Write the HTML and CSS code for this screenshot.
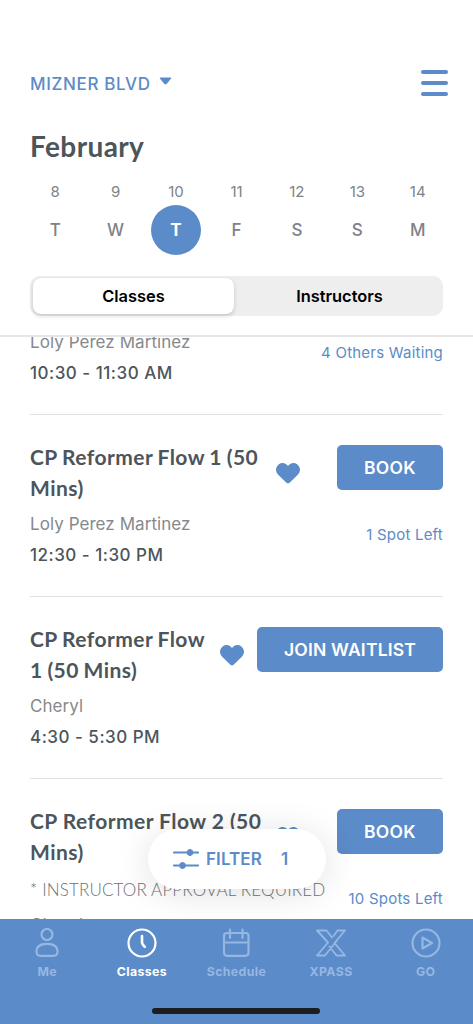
FILE: index.html
```html
<!DOCTYPE html>
<html lang="en">
<head>
<meta charset="utf-8">
<title>Classes</title>
<link rel="stylesheet" href="styles.css">
</head>
<body>
<div class="app">
  <header class="header">
    <div class="topbar">
      <div class="location"><span class="location-name">MIZNER BLVD</span>
        <svg class="caret" width="13" height="8" viewBox="0 0 12 8"><path d="M1 .5h10q1 0 .6 1L7.3 6.7Q6 8 4.700 6.700L.4 1.500Q0 .5 1 .5z" fill="currentColor"/></svg>
      </div>
      <div class="menu"><i></i><i></i><i></i></div>
    </div>
    <h1 class="month">February</h1>
    <div class="week">
      <div class="day"><span class="num">8</span><span class="letter">T</span></div>
      <div class="day"><span class="num">9</span><span class="letter">W</span></div>
      <div class="day"><span class="num">10</span><span class="letter selected">T</span></div>
      <div class="day"><span class="num">11</span><span class="letter">F</span></div>
      <div class="day"><span class="num">12</span><span class="letter">S</span></div>
      <div class="day"><span class="num">13</span><span class="letter">S</span></div>
      <div class="day"><span class="num">14</span><span class="letter">M</span></div>
    </div>
    <div class="segments">
      <div class="segment active">Classes</div>
      <div class="segment">Instructors</div>
    </div>
  </header>

  <main class="list">
    <article class="card first">
      <div class="info">
        <p class="coach">Loly Perez Martinez</p>
        <p class="time">10:30 - 11:30 AM</p>
      </div>
      <div class="actions"><span class="status">4 Others Waiting</span></div>
    </article>
    <article class="card">
      <div class="info">
        <h2 class="title tight">CP Reformer Flow 1 (50<br>Mins)</h2>
        <p class="coach">Loly Perez Martinez</p>
        <p class="time">12:30 - 1:30 PM</p>
      </div>
      <svg class="heart" width="24" height="21" viewBox="0 0 24 21"><path d="M12 3C9.500-.7 5-.8 2.200 1.900C-.7 4.700-.7 9 2.200 11.800L10.400 19.700Q12 21 13.600 19.700L21.800 11.800C24.700 9 24.700 4.700 21.800 1.900C19-.8 14.500-.7 12 3z" fill="currentColor"/></svg>
      <div class="actions"><button class="btn">BOOK</button><span class="status">1 Spot Left</span></div>
    </article>
    <article class="card">
      <div class="info">
        <h2 class="title tight">CP Reformer Flow<br>1 (50 Mins)</h2>
        <p class="coach">Cheryl</p>
        <p class="time">4:30 - 5:30 PM</p>
      </div>
      <svg class="heart" width="24" height="21" viewBox="0 0 24 21"><path d="M12 3C9.500-.7 5-.8 2.200 1.900C-.7 4.700-.7 9 2.200 11.800L10.400 19.700Q12 21 13.600 19.700L21.800 11.800C24.700 9 24.700 4.700 21.800 1.900C19-.8 14.500-.7 12 3z" fill="currentColor"/></svg>
      <div class="actions"><button class="btn wide">JOIN WAITLIST</button></div>
    </article>
    <article class="card">
      <div class="info">
        <h2 class="title">CP Reformer Flow 2 (50<br>Mins)</h2>
        <p class="note">* INSTRUCTOR APPROVAL REQUIRED</p>
        <p class="coach">Cheryl</p>
      </div>
      <svg class="heart" width="24" height="21" viewBox="0 0 24 21"><path d="M12 3C9.500-.7 5-.8 2.200 1.900C-.7 4.700-.7 9 2.200 11.800L10.400 19.700Q12 21 13.600 19.700L21.800 11.800C24.700 9 24.700 4.700 21.800 1.900C19-.8 14.500-.7 12 3z" fill="currentColor"/></svg>
      <div class="actions"><button class="btn">BOOK</button><span class="status">10 Spots Left</span></div>
    </article>
    <div class="filter">
      <svg width="26" height="22" viewBox="0 0 26 22" fill="none" stroke="currentColor" stroke-width="2.200" stroke-linecap="round"><path d="M1 4.500h24M1 17.500h24"/><circle cx="17" cy="4.500" r="3.200" fill="currentColor" stroke="none"/><circle cx="9.500" cy="17.500" r="3.200" fill="currentColor" stroke="none"/><path d="M17 2v5M9.500 15v5"/></svg>
      <span class="filter-label">FILTER</span><span class="filter-count">1</span>
    </div>
  </main>

  <nav class="tabs">
    <div class="tab">
      <svg width="30" height="30" viewBox="0 0 30 30"><circle cx="15" cy="6.500" r="5.500"/><path d="M4.500 23.500c0-5 3.700-7.700 10.500-7.700s10.500 2.700 10.500 7.700c0 2.800-1.500 4.300-4 4.300H8.500c-2.500 0-4-1.500-4-4.300z"/></svg>
      <span>Me</span>
    </div>
    <div class="tab current">
      <svg width="30" height="30" viewBox="0 0 30 30"><circle cx="15" cy="15" r="13.500"/><path d="M15 8v6.500q0 1.500 2.800 4.300" stroke-width="2.600"/></svg>
      <span>Classes</span>
    </div>
    <div class="tab">
      <svg width="30" height="30" viewBox="0 0 30 30"><rect x="3" y="5" width="24.500" height="22.800" rx="3"/><path d="M3 14.500h24.500M9 1.500v8.500M21.500 1.500v8.500"/></svg>
      <span>Schedule</span>
    </div>
    <div class="tab">
      <svg class="thin" width="30" height="30" viewBox="0 0 30 30"><path d="M12 14.500L1 2.500h9.500l5.500 7M17.500 8L21.500 2.500H29L18.500 15L29 27.500h-8.500L13.500 18.500M12 14.500L1 27.500h8L21 12.500"/></svg>
      <span>XPASS</span>
    </div>
    <div class="tab">
      <svg width="30" height="30" viewBox="0 0 30 30"><circle cx="15" cy="15" r="13.500"/><path d="M11.500 9.500v11l9.500-5.500z"/></svg>
      <span>GO</span>
    </div>
    <div class="home-bar"></div>
  </nav>
</div>
</body>
</html>
```
FILE: styles.css
```css
* { box-sizing: border-box; margin: 0; padding: 0; }
body { background: #fff; font-family: Inter, "Liberation Sans", sans-serif; color: #4c555b; }
.app { width: 473px; height: 1024px; display: flex; flex-direction: column; overflow: hidden; }

.header { height: 337px; padding: 66px 30px 0; border-bottom: 2px solid #e5e5e6; flex: none; }
.topbar { display: flex; justify-content: space-between; align-items: center; height: 34px; }
.location { display: flex; align-items: center; gap: 8px; margin-top: 1px; color: #5b8bc8; font-size: 17px; font-weight: 500; letter-spacing: .65px; }
.caret { margin-bottom: 5px; }
.menu { display: flex; flex-direction: column; gap: 7px; margin-right: -5px; }
.menu i { width: 27px; height: 4px; border-radius: 2px; background: #5b8bc8; }
.month { margin-top: 26px; height: 40px; line-height: 40px; font-family: Lato, sans-serif; font-weight: 700; font-size: 28px; letter-spacing: .4px; }
.week { display: flex; margin: 16px -5px 0; }
.day { flex: 1; display: flex; flex-direction: column; align-items: center; color: #808287; }
.num { height: 20px; line-height: 20px; font-size: 15px; }
.letter { width: 50px; height: 50px; margin-top: 3px; display: flex; align-items: center; justify-content: center; font-size: 17px; font-weight: 500; border-radius: 50%; }
.letter.selected { background: #5b8bc8; color: #fff; font-weight: 700; }
.segments { display: flex; height: 40px; margin-top: 21px; padding: 2px; border-radius: 10px; background: #eeeeef; }
.segment { flex: 1; display: flex; align-items: center; justify-content: center; padding-left: 4px; font-size: 16.400px; font-weight: 600; color: #000; border-radius: 8px; }
.segment.active { flex: none; width: 201px; margin-left: 1px; padding-left: 0; background: #fff; box-shadow: 0 2px 4px rgba(0,0,0,.16), 0 0 1px rgba(0,0,0,.1); }

.list { flex: 1; min-height: 0; overflow: hidden; position: relative; padding: 0 30px; }
.card { display: flex; align-items: flex-start; height: 182px; padding-top: 27px; border-bottom: 1px solid #e0e1e2; }
.card.first { height: 78px; padding-top: 0; }
.card.first .coach { margin-top: -10px; }
.card.first .actions { margin-top: -29px; }
.info { flex: 1; min-width: 0; white-space: nowrap; }
.title { font-family: Lato, sans-serif; font-weight: 700; font-size: 21px; line-height: 30.500px; letter-spacing: .45px; }
.title.tight { word-spacing: -.8px; }
.coach { margin-top: 6px; height: 31px; line-height: 31px; font-size: 17px; color: #86898c; letter-spacing: .06px; }
.time { line-height: 31px; font-size: 17px; font-weight: 500; letter-spacing: .5px; }
.note { margin-top: 7px; line-height: 31px; font-family: Lato, sans-serif; font-weight: 300; font-size: 17px; letter-spacing: .15px; color: #6d7276; }
.note + .coach { margin-top: 5px; }
.heart { flex: none; margin-top: 21px; color: #5b8bc8; }
.actions { flex: none; min-width: 143px; padding-left: 13px; margin-top: 3px; display: flex; flex-direction: column; align-items: flex-end; }
.btn { width: 106px; height: 45px; border: 0; border-radius: 5px; background: #5b8bc8; color: #fff; font: 600 17.500px Inter, sans-serif; letter-spacing: .3px; }
.btn.wide { width: 186px; letter-spacing: .2px; }
.status { margin-top: 35px; height: 20px; line-height: 20px; font-size: 15px; color: #5b8bc8; letter-spacing: .22px; }

/* Floating pill above the class list */
.filter { position: absolute; left: 148px; bottom: 30px; width: 178px; height: 60px; padding-left: 25px; display: flex; align-items: center; border-radius: 30px; background: #fff; color: #5b8bc8; font-size: 17px; font-weight: 600; box-shadow: 0 4px 36px rgba(0,0,0,.12); }
.filter-label { margin-left: 7px; letter-spacing: .1px; }
.filter-count { margin-left: 19px; }

.tabs { flex: none; height: 105px; background: #5b8bc8; display: grid; grid-template-columns: repeat(5, 1fr); grid-template-rows: 89px 6px; }
.tab { display: flex; flex-direction: column; align-items: center; padding-top: 9px; color: #96b7e2; font-size: 12.300px; font-weight: 700; letter-spacing: .4px; }
.tab span { margin-top: 6px; line-height: 16px; }
.tab svg { fill: none; stroke: currentColor; stroke-width: 2.200; stroke-linecap: round; stroke-linejoin: round; }
.tab svg.thin { stroke-width: 1.900; }
.tab.current { color: #fff; }
.home-bar { grid-column: 1 / -1; justify-self: center; width: 168px; height: 6px; border-radius: 3px; background: #1b1d20; }
```
